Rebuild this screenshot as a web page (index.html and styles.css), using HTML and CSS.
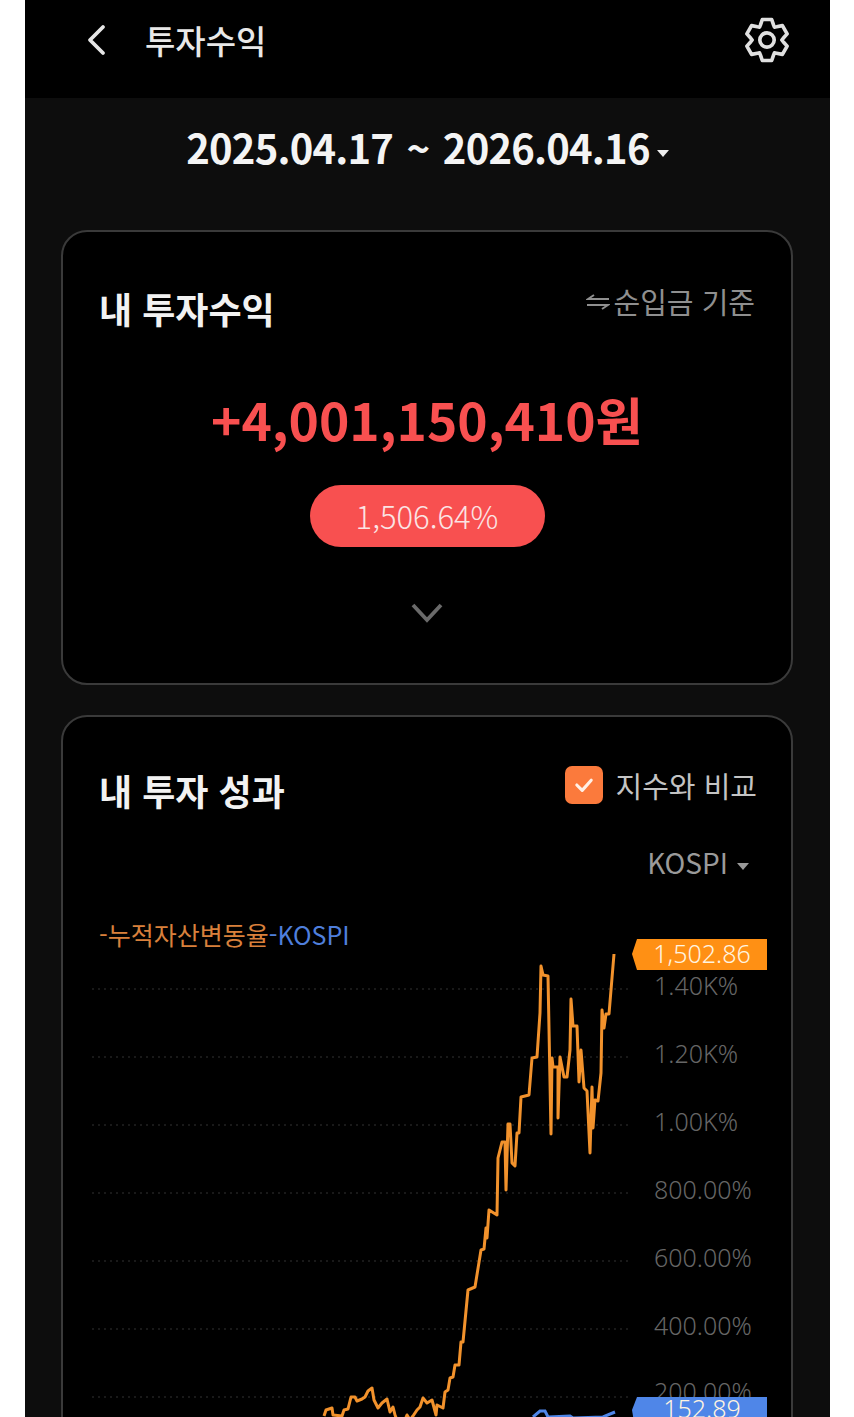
FILE: index.html
```html
<!DOCTYPE html>
<html lang="ko">
<head>
    <meta charset="UTF-8">
    <title>투자수익</title>
    <link rel="stylesheet" href="styles.css">
</head>
<body>
<div class="screen">
    <header class="top">
        <div class="top-left">
            <svg class="back" viewBox="0 0 20 32"><path d="M17 3 L4 16 L17 29"/></svg>
            <h1>투자수익</h1>
        </div>
        <svg class="gear" viewBox="-24 -24 48 48">
            <path d="M-6.9 -15.5 L-4.9 -21.4 L4.9 -21.4 L6.9 -15.5 L7.75 -13.4 L10 -13.75 L16.1 -15 L21 -6.4 L16.9 -1.8 L15.5 0 L16.9 1.8 L21 6.4 L16.1 15 L10 13.75 L7.75 13.4 L6.9 15.5 L4.9 21.4 L-4.9 21.4 L-6.9 15.5 L-7.75 13.4 L-10 13.75 L-16.1 15 L-21 6.4 L-16.9 1.8 L-15.5 0 L-16.9 -1.8 L-21 -6.4 L-16.1 -15 L-10 -13.75 L-7.75 -13.4 Z"/>
            <circle r="7.5"/>
        </svg>
    </header>

    <div class="period">2025.04.17 ~ 2026.04.16<i class="caret"></i></div>

    <section class="card card-profit">
        <div class="card-head">
            <h2>내 투자수익</h2>
            <div class="basis">
                <svg class="swap" viewBox="0 0 24 16"><path d="M23 5 H2 L8 1 M1 11 H22 L16 15"/></svg>
                <span>순입금 기준</span>
            </div>
        </div>
        <div class="amount">+4,001,150,410원</div>
        <div class="rate">1,506.64%</div>
        <svg class="more" viewBox="0 0 32 20"><path d="M2 2 L16 17 L30 2"/></svg>
    </section>

    <section class="card card-chart">
        <div class="card-head">
            <h2>내 투자 성과</h2>
            <div class="compare">
                <span class="check"><svg viewBox="0 0 20 20"><path d="M4 10 L8.5 14.5 L16 6"/></svg></span>
                <span>지수와 비교</span>
            </div>
        </div>
        <div class="index-pick">KOSPI<i class="caret caret-sm"></i></div>
        <div class="legend"><span class="lg-a">-누적자산변동율</span><span class="lg-b">-KOSPI</span></div>
        <svg class="chart" viewBox="63 950 729 500">
            <g class="grid">
                <line x1="92" x2="628" y1="989" y2="989"/>
                <line x1="92" x2="628" y1="1057" y2="1057"/>
                <line x1="92" x2="628" y1="1125" y2="1125"/>
                <line x1="92" x2="628" y1="1193" y2="1193"/>
                <line x1="92" x2="628" y1="1261" y2="1261"/>
                <line x1="92" x2="628" y1="1329" y2="1329"/>
                <line x1="92" x2="628" y1="1397" y2="1397"/>
            </g>
            <g class="ticks">
                <text x="654" y="995">1.40K%</text>
                <text x="654" y="1063">1.20K%</text>
                <text x="654" y="1131">1.00K%</text>
                <text x="654" y="1199">800.00%</text>
                <text x="654" y="1267">600.00%</text>
                <text x="654" y="1335">400.00%</text>
                <text x="654" y="1401">200.00%</text>
            </g>
            <polyline class="line-kospi" points="533,1417 540,1411 545,1411 548,1417 570,1416 573,1418 603,1417 615,1412"/>
            <polyline class="line-mine" points="324,1416 326,1410 332,1408 333,1415 342,1416 344,1410 348,1409 351,1397 355,1397 357,1401 362,1399 365,1397 368,1391 372,1388 374,1400 378,1408 382,1403 387,1399 390,1412 393,1407 395,1415 397,1420 405,1420 407,1415 410,1420 413,1416 417,1410 420,1407 423,1398 427,1403 432,1400 436,1415 437,1405 443,1408 445,1392 448,1390 450,1378 453,1377 455,1365 459,1365 461,1342 463,1342 468,1290 475,1287 481,1250 484,1249 486,1228 487,1238 489,1210 497,1215 498,1158 502,1142 505,1142 506,1190 508,1124 510,1124 512,1163 515,1166 517,1133 519,1133 521,1097 529,1095 532,1058 537,1057 540,1013 541,966 543,975 548,976 551,1134 552,1058 553,1067 558,1067 558,1118 560,1057 564,1077 567,1077 570,1050 571,999 573,1026 577,1026 579,1082 581,1050 584,1088 587,1091 590,1153 592,1087 593,1128 595,1100 598,1101 601,1073 602,1010 604,1028 606,1014 609,1014 614,954"/>
            <polygon class="tag-mine" points="632,954 637,939 767,939 767,970 637,970"/>
            <text class="tag-text" x="702" y="963">1,502.86</text>
            <polygon class="tag-kospi" points="632,1410 637,1397 767,1397 767,1440 637,1440"/>
            <text class="tag-text" x="702" y="1418">152.89</text>
        </svg>
    </section>
</div>
</body>
</html>
```

FILE: styles.css
```css
*{
    margin:0;
    padding:0;
    box-sizing:border-box;
}
html,body{
    height:1417px;
    overflow:hidden;
    background:#fff;
}
body{
    font-family:"Noto Sans CJK KR","Noto Sans",sans-serif;
}
.screen{
    width:805px;
    height:1417px;
    margin-left:25px;
    background:#0d0d0d;
    overflow:hidden;
    color:#f2f2f2;
}
.top{
    height:98px;
    background:#000;
    display:flex;
    justify-content:space-between;
    padding:17px 40px 0 61px;
    align-items:flex-start;
}
.top-left{
    display:flex;
    align-items:center;
    gap:39px;
    height:46px;
}
.back{
    width:20px;
    height:32px;
}
.back path{
    fill:none;
    stroke:#e6e6e6;
    stroke-width:3.8;
    stroke-linecap:round;
    stroke-linejoin:round;
}
.top h1{
    font-size:33px;
    font-weight:500;
    line-height:46px;
    color:#e8e8e8;
}
.gear{
    width:46px;
    height:46px;
}
.gear path,.gear circle{
    fill:none;
    stroke:#e0e0e0;
    stroke-width:3.8;
    stroke-linejoin:round;
}
.period{
    height:132px;
    padding-top:22px;
    text-align:center;
    font-size:40px;
    line-height:54px;
    font-weight:700;
    letter-spacing:-0.8px;
    word-spacing:3px;
    color:#f4f4f4;
}
.caret{
    display:inline-block;
    width:0;
    height:0;
    margin-left:7px;
    vertical-align:middle;
    border-left:6px solid transparent;
    border-right:6px solid transparent;
    border-top:7px solid #eee;
}
.caret-sm{
    margin-left:9px;
    border-top-color:#999;
}
.card{
    width:732px;
    margin-left:36px;
    background:#000;
    border:2px solid #3a3a3a;
    border-radius:26px;
    padding:0 36px;
}
.card-profit{
    height:455px;
    display:flex;
    flex-direction:column;
    align-items:center;
    padding-top:51px;
}
.card-chart{
    margin-top:30px;
    height:800px;
    padding-top:48px;
}
.card-head{
    width:100%;
    display:flex;
    justify-content:space-between;
    align-items:flex-start;
}
.card h2{
    font-size:36px;
    line-height:50px;
    font-weight:700;
    color:#f2f2f2;
}
.basis{
    display:flex;
    align-items:center;
    gap:3px;
    font-size:29px;
    line-height:40px;
    margin-top:-2px;
    color:#8f8f8f;
}
.swap{
    width:24px;
    height:16px;
    margin-top:2px;
}
.swap path{
    fill:none;
    stroke:#8f8f8f;
    stroke-width:2;
}
.amount{
    margin-top:48px;
    font-size:51.5px;
    line-height:76px;
    font-weight:700;
    color:#f85050;
}
.rate{
    margin-top:28px;
    width:235px;
    height:62px;
    border-radius:31px;
    background:#f85050;
    color:#fbe4e4;
    font-size:31px;
    line-height:62px;
    text-align:center;
    font-weight:300;
}
.more{
    width:32px;
    height:20px;
    margin-top:56px;
}
.more path{
    fill:none;
    stroke:#6a6a6a;
    stroke-width:3.8;
}
.compare{
    display:flex;
    align-items:center;
    gap:12px;
    font-size:29px;
    line-height:38px;
    margin-top:1px;
    margin-right:-2px;
    color:#c4c4c4;
}
.check{
    width:38px;
    height:38px;
    border-radius:7px;
    background:#fb7a3c;
    display:flex;
    align-items:center;
    justify-content:center;
}
.check svg{
    width:24px;
    height:24px;
}
.check path{
    fill:none;
    stroke:#fff0e6;
    stroke-width:2.6;
    stroke-linecap:round;
    stroke-linejoin:round;
}
.index-pick{
    margin-top:27px;
    height:40px;
    text-align:right;
    padding-right:6px;
    font-size:28px;
    line-height:40px;
    color:#9a9a9a;
}
.legend{
    margin-top:37px;
    font-size:25px;
    line-height:30px;
}
.lg-a{
    color:#d9803c;
}
.lg-b{
    color:#4f7fdc;
}
.chart{
    display:block;
    width:729px;
    height:500px;
    margin:1px -36px 0;
    overflow:visible;
}
.grid line{
    stroke:#333;
    stroke-width:1;
    stroke-dasharray:2 4;
}
.ticks text{
    font-size:25px;
    fill:#666;
    font-family:"Noto Sans",sans-serif;
    font-weight:300;
}
.line-mine{
    fill:none;
    stroke:#f2922c;
    stroke-width:3;
    stroke-linejoin:round;
}
.line-kospi{
    fill:none;
    stroke:#4f86e8;
    stroke-width:3;
}
.tag-mine{
    fill:#ff9014;
}
.tag-kospi{
    fill:#4f86e8;
}
.tag-text{
    font-size:25px;
    font-family:"Noto Sans",sans-serif;
    font-weight:300;
    fill:#fff4e0;
    text-anchor:middle;
}
```
